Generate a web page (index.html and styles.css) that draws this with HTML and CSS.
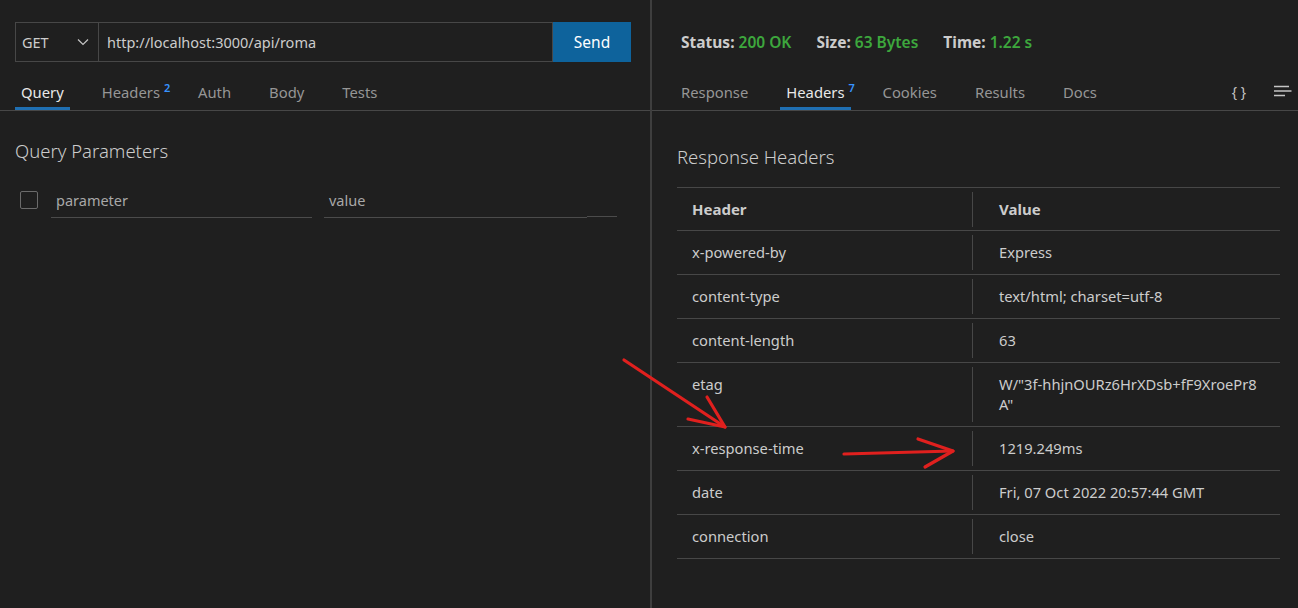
FILE: index.html
```html
<!DOCTYPE html>
<html lang="en">
<head>
<meta charset="utf-8">
<title>Thunder Client</title>
<link rel="stylesheet" href="styles.css">
</head>
<body>
<div class="app">
  <section class="pane left">
    <div class="reqbar">
      <div class="method">
        <span>GET</span>
        <svg class="chev" width="12" height="8" viewBox="0 0 12 8"><path d="M1 1.5 L6 6.5 L11 1.5" fill="none" stroke="#c5c5c5" stroke-width="1.2"/></svg>
      </div>
      <div class="url">http://localhost:3000/api/roma</div>
      <button class="send">Send</button>
    </div>
    <nav class="tabs">
      <span class="tab active">Query</span>
      <span class="tab">Headers<sup class="badge">2</sup></span>
      <span class="tab">Auth</span>
      <span class="tab">Body</span>
      <span class="tab">Tests</span>
    </nav>
    <h2 class="section-title">Query Parameters</h2>
    <div class="param-row">
      <span class="checkbox"></span>
      <span class="field name">parameter</span>
      <span class="field val">value</span>
      <span class="field extra"></span>
    </div>
  </section>
  <section class="pane right">
    <div class="statusbar">
      <span class="stat"><b>Status:</b> <em>200 OK</em></span>
      <span class="stat"><b>Size:</b> <em>63 Bytes</em></span>
      <span class="stat"><b>Time:</b> <em>1.22 s</em></span>
    </div>
    <nav class="tabs rtabs">
      <span class="tab">Response</span>
      <span class="tab active">Headers<sup class="badge">7</sup></span>
      <span class="tab">Cookies</span>
      <span class="tab">Results</span>
      <span class="tab">Docs</span>
      <span class="tab-tools">
        <span class="braces">{ }</span>
        <svg class="menu" width="18" height="14" viewBox="0 0 18 14"><path d="M0 2.5 H15 M0 7 H17.5 M0 11.5 H11" stroke="#c5c5c5" stroke-width="1.3" fill="none"/></svg>
      </span>
    </nav>
    <h2 class="section-title rtitle">Response Headers</h2>
    <div class="htable">
      <div class="hrow head"><div class="c k">Header</div><div class="c v">Value</div></div>
      <div class="hrow"><div class="c k">x-powered-by</div><div class="c v">Express</div></div>
      <div class="hrow"><div class="c k">content-type</div><div class="c v">text/html; charset=utf-8</div></div>
      <div class="hrow"><div class="c k">content-length</div><div class="c v">63</div></div>
      <div class="hrow"><div class="c k">etag</div><div class="c v">W/"3f-hhjnOURz6HrXDsb+fF9XroePr8<br>A"</div></div>
      <div class="hrow"><div class="c k">x-response-time</div><div class="c v">1219.249ms</div></div>
      <div class="hrow"><div class="c k">date</div><div class="c v">Fri, 07 Oct 2022 20:57:44 GMT</div></div>
      <div class="hrow"><div class="c k">connection</div><div class="c v">close</div></div>
    </div>
  </section>
</div>
<svg class="annot" width="1298" height="608" viewBox="0 0 1298 608">
  <g stroke="#e0201e" stroke-width="3.2" fill="none" stroke-linecap="round" stroke-linejoin="round">
    <path d="M624 360 L725 427"/>
    <path d="M688 419 L725 427 L707 397"/>
    <path d="M844 454 L953 451"/>
    <path d="M918 439 L953 451 L925 467"/>
  </g>
</svg>
</body>
</html>
```
FILE: styles.css
```css
* { box-sizing: border-box; }
html, body { margin: 0; padding: 0; }
body {
  background: #1f1f1f;
  color: #cccccc;
  font-family: "Noto Sans", "Open Sans", sans-serif;
  font-size: 14px;
  width: 1298px;
  height: 608px;
  overflow: hidden;
  position: relative;
}
.app { display: flex; height: 608px; }
.pane { display: flex; flex-direction: column; }
.left { width: 652px; border-right: 2px solid #3e3e3e; padding-top: 22px; }
.right { flex: 1; padding-top: 22px; }

/* request bar */
.reqbar { display: flex; height: 40px; margin: 0 19px 0 15px; }
.method {
  width: 84px; border: 1px solid #474747; display: flex; align-items: center;
  justify-content: space-between; padding: 0 9px 0 6px; color: #cccccc; font-size: 14.5px;
}
.chev { display: block; }
.url {
  flex: 1; border: 1px solid #474747; border-left: none; display: flex; align-items: center;
  padding-left: 8px; color: #cccccc; font-size: 14.5px;
}
.send {
  width: 78px; border: none; background: #0e639c; color: #ffffff;
  font-family: inherit; font-size: 15.5px; padding: 0;
}

/* tabs */
.tabs {
  display: flex; gap: 26px; margin-top: 14px; border-bottom: 1px solid #474747;
  padding-left: 15px; height: 35px;
}
.tab {
  position: relative; padding: 6px 6px 0; line-height: 20px; height: 34px;
  color: #969696; font-size: 14.8px; border-bottom: 3px solid transparent;
}
.tab.active { color: #e8e8e8; border-bottom-color: #1f6fb2; }
.badge {
  position: absolute; top: 6px; left: 100%; margin-left: -2px; font-size: 11px;
  color: #3794ff; line-height: 12px; font-weight: 600;
}
.rtabs { padding-left: 23px; margin-top: 14px; }
.tab-tools { margin-left: auto; display: flex; align-items: center; gap: 28px; padding: 0 6px 4px 0; }
.braces { color: #c5c5c5; font-size: 14px; }
.menu { display: block; }

/* left content */
.section-title {
  margin: 28px 0 0 15px; font-weight: 300; font-size: 18.5px; line-height: 24px; color: #cccccc;
}
.param-row { display: flex; align-items: center; margin: 22px 0 0 20px; height: 30px; }
.checkbox {
  width: 18px; height: 18px; border: 1px solid #6b6b6b; border-radius: 2px; margin-right: 13px;
}
.field {
  height: 30px; line-height: 24px; border-bottom: 1px solid #4b4b4b; color: #a8a8a8;
  padding-left: 5px; font-size: 14.5px; margin-top: 5px;
}
.field.name { width: 261px; margin-right: 12px; }
.field.val { width: 263px; }
.field.extra { width: 30px; margin-top: 3px; }

/* right content */
.statusbar { height: 40px; display: flex; align-items: center; gap: 25px; padding-left: 29px; font-size: 15.5px; }
.stat b { font-weight: 700; color: #cccccc; }
.stat em { font-style: normal; font-weight: 600; color: #3da73d; }
.rtitle { margin: 34px 0 0 25px; }
.htable { margin: 18px 18px 0 25px; border-top: 1px solid #474747; }
.hrow { display: grid; grid-template-columns: 295px 1fr; border-bottom: 1px solid #474747; padding: 4px 0; }
.c { padding: 7px 15px 8px; line-height: 20px; font-size: 14.7px; color: #cccccc; }
.c.v { border-left: 1px solid #474747; padding-left: 26px; }
.hrow.head { padding: 4px 0 3px; }
.hrow.head .c { font-weight: 700; font-size: 15px; color: #cccccc; }

.annot { position: absolute; left: 0; top: 0; pointer-events: none; }
```
